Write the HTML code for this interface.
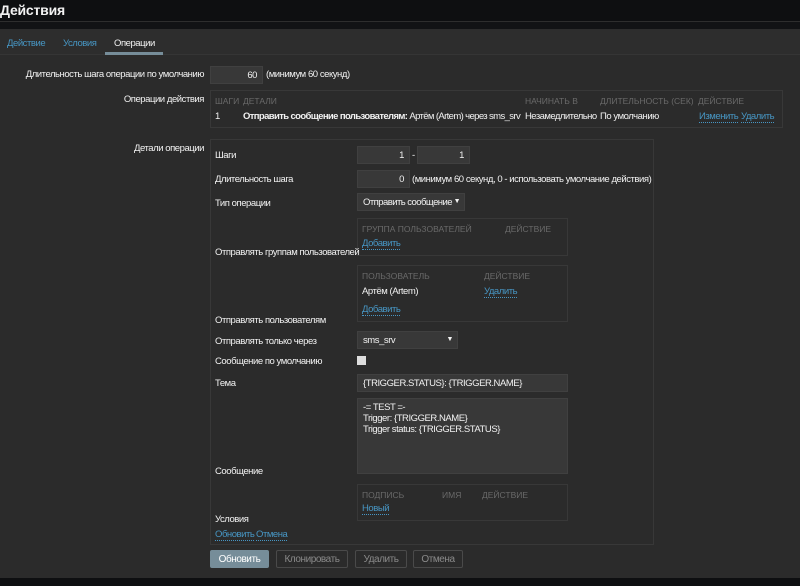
<!DOCTYPE html>
<html><head><meta charset="utf-8"><style>
*{margin:0;padding:0;box-sizing:border-box}
body{width:800px;height:586px;background:#2b2b2b;font-family:"Liberation Sans",sans-serif;font-size:9.5px;letter-spacing:-0.45px;color:#f2f2f2;position:relative;overflow:hidden}
.a{position:absolute;white-space:nowrap}
.r{text-align:right}
.hdr{left:0;top:0;width:800px;height:21px;background:#0e0f11}
.hl{left:0;top:21px;width:800px;height:8px;background:#121315;border-top:1px solid #2e2e2e}
.tabs{left:0;top:29px;width:800px;height:26px;background:#2d2d2d;border-bottom:1px solid #353535}
.lnk{color:#4796c4;border-bottom:1px dotted #4796c4}
.th{color:#6a6a6a;font-size:8.5px;letter-spacing:0}
.box{border:1px solid #383838;background:#2b2b2b}
.inp{background:#383838;border:1px solid #404040;height:18px;text-align:right;padding:3px 5px;color:#f2f2f2}
.btn{border:1px solid #4a4a4a;color:#8a8a8a;height:18px;text-align:center;line-height:17px;border-radius:2px;font-size:10px}
</style></head><body>
<div class="a hdr"></div>
<div class="a" style="left:0;top:2px;font-size:14px;font-weight:bold;letter-spacing:-0.2px;color:#f2f2f2">Действия</div>
<div class="a hl"></div>
<div class="a tabs"></div>
<div class="a" style="left:7px;top:38px;color:#4796c4">Действие</div>
<div class="a" style="left:63px;top:38px;color:#4796c4">Условия</div>
<div class="a" style="left:114px;top:38px">Операции</div>
<div class="a" style="left:105px;top:52px;width:58px;height:3px;background:#768d99"></div>

<div class="a r" style="right:596px;top:69px">Длительность шага операции по умолчанию</div>
<div class="a inp" style="left:210px;top:66px;width:53px">60</div>
<div class="a" style="left:266px;top:69px">(минимум 60 секунд)</div>

<div class="a r" style="right:596px;top:94px">Операции действия</div>
<div class="a box" style="left:210px;top:90px;width:573px;height:38px"></div>
<div class="a th" style="left:215px;top:96px">ШАГИ</div>
<div class="a th" style="left:243px;top:96px">ДЕТАЛИ</div>
<div class="a th" style="left:525px;top:96px">НАЧИНАТЬ В</div>
<div class="a th" style="left:600px;top:96px">ДЛИТЕЛЬНОСТЬ (СЕК)</div>
<div class="a th" style="left:698px;top:96px">ДЕЙСТВИЕ</div>
<div class="a" style="left:215px;top:111px">1</div>
<div class="a" style="left:243px;top:111px;letter-spacing:-0.62px"><b>Отправить сообщение пользователям:</b> Артём (Artem) через sms_srv</div>
<div class="a" style="left:525px;top:111px;letter-spacing:-0.55px">Незамедлительно</div>
<div class="a" style="left:600px;top:111px">По умолчанию</div>
<div class="a lnk" style="left:699px;top:111px">Изменить</div>
<div class="a lnk" style="left:741px;top:111px">Удалить</div>

<div class="a r" style="right:596px;top:143px">Детали операции</div>
<div class="a box" style="left:210px;top:139px;width:444px;height:406px"></div>
<div class="a" style="left:215px;top:150px">Шаги</div>
<div class="a inp" style="left:357px;top:146px;width:53px">1</div>
<div class="a" style="left:412px;top:150px">-</div>
<div class="a inp" style="left:417px;top:146px;width:53px">1</div>
<div class="a" style="left:215px;top:174px">Длительность шага</div>
<div class="a inp" style="left:357px;top:170px;width:53px">0</div>
<div class="a" style="left:412px;top:174px">(минимум 60 секунд, 0 - использовать умолчание действия)</div>
<div class="a" style="left:215px;top:198px">Тип операции</div>
<div class="a inp" style="left:357px;top:193px;width:108px;text-align:left;letter-spacing:-0.55px">Отправить сообщение<span style="position:absolute;right:4px;font-size:7px;top:4px">▼</span></div>

<div class="a box" style="left:357px;top:218px;width:211px;height:38px"></div>
<div class="a th" style="left:362px;top:224px">ГРУППА ПОЛЬЗОВАТЕЛЕЙ</div>
<div class="a th" style="left:505px;top:224px">ДЕЙСТВИЕ</div>
<div class="a lnk" style="left:362px;top:238px">Добавить</div>
<div class="a" style="left:215px;top:247px">Отправлять группам пользователей</div>

<div class="a box" style="left:357px;top:265px;width:211px;height:57px"></div>
<div class="a th" style="left:362px;top:271px">ПОЛЬЗОВАТЕЛЬ</div>
<div class="a th" style="left:484px;top:271px">ДЕЙСТВИЕ</div>
<div class="a" style="left:362px;top:286px">Артём (Artem)</div>
<div class="a lnk" style="left:484px;top:286px">Удалить</div>
<div class="a lnk" style="left:362px;top:304px">Добавить</div>
<div class="a" style="left:215px;top:315px">Отправлять пользователям</div>

<div class="a" style="left:215px;top:336px">Отправлять только через</div>
<div class="a inp" style="left:357px;top:331px;width:101px;text-align:left">sms_srv<span style="position:absolute;right:4px;font-size:7px;top:4px">▼</span></div>
<div class="a" style="left:215px;top:356px">Сообщение по умолчанию</div>
<div class="a" style="left:357px;top:356px;width:9px;height:9px;background:#ddd"></div>
<div class="a" style="left:215px;top:378px">Тема</div>
<div class="a inp" style="left:357px;top:374px;width:211px;text-align:left">{TRIGGER.STATUS}: {TRIGGER.NAME}</div>
<div class="a inp" style="left:357px;top:398px;width:211px;height:76px;text-align:left;white-space:pre;line-height:11px">-= TEST =-
Trigger: {TRIGGER.NAME}
Trigger status: {TRIGGER.STATUS}</div>
<div class="a" style="left:215px;top:466px">Сообщение</div>

<div class="a box" style="left:357px;top:484px;width:211px;height:37px"></div>
<div class="a th" style="left:362px;top:490px">ПОДПИСЬ</div>
<div class="a th" style="left:442px;top:490px">ИМЯ</div>
<div class="a th" style="left:482px;top:490px">ДЕЙСТВИЕ</div>
<div class="a lnk" style="left:362px;top:503px">Новый</div>
<div class="a" style="left:215px;top:514px">Условия</div>
<div class="a lnk" style="left:215px;top:529px">Обновить</div>
<div class="a lnk" style="left:256px;top:529px">Отмена</div>

<div class="a btn" style="left:210px;top:550px;width:59px;background:#768d99;border-color:#768d99;color:#fff">Обновить</div>
<div class="a btn" style="left:276px;top:550px;width:72px">Клонировать</div>
<div class="a btn" style="left:355px;top:550px;width:52px">Удалить</div>
<div class="a btn" style="left:413px;top:550px;width:50px">Отмена</div>
<div class="a" style="left:0;top:578px;width:800px;height:8px;background:#0e0f11"></div>
</body></html>
